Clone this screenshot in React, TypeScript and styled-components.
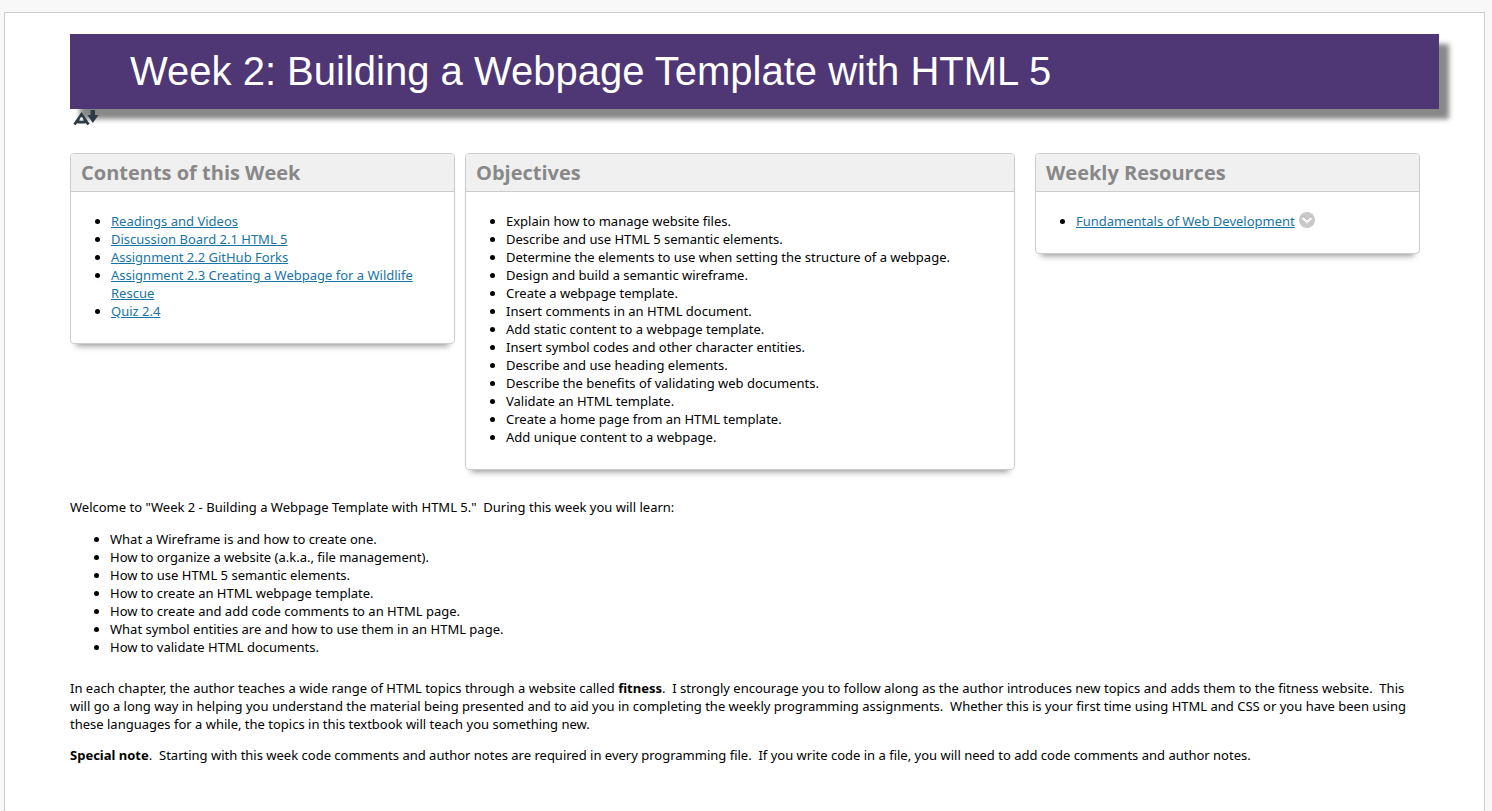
import React from "react";
import styled, { createGlobalStyle } from "styled-components";

const GlobalStyle = createGlobalStyle`
  *, *::before, *::after { box-sizing: border-box; }
  body {
    margin: 0;
    background: #f8f8f8;
    color: #000;
    font-family: "Noto Sans", "Open Sans", sans-serif;
    font-size: 13px;
    line-height: 18px;
  }
`;

const Page = styled.main`
  min-height: calc(100vh - 12px);
  margin: 12px 7px 0 4px;
  padding: 21px 45px 46px 65px;
  border: 1px solid #ccc;
  border-bottom: 0;
  background: #fff;
`;

const Banner = styled.h1`
  margin: 0;
  padding: 14px 60px 15px;
  background: #4f3674;
  color: #fff;
  box-shadow: 10px 10px 5px #888;
  font-family: "Liberation Sans", Arial, sans-serif;
  font-size: 40px;
  font-weight: 400;
  line-height: 46px;
`;

const Tools = styled.div`
  position: relative;
  display: flex;
  height: 44px;
  padding: 1px 3px;
`;

const IconButton = styled.button`
  display: inline-flex;
  align-self: flex-start;
  padding: 0;
  border: 0;
  background: none;
  cursor: pointer;
`;

const MenuButton = styled(IconButton)`
  margin-left: 4px;
  vertical-align: -2px;
`;

const Cards = styled.div`
  display: grid;
  grid-template-columns: 385fr 550fr 395fr;
  align-items: start;
  column-gap: 10px;
  padding-right: 19px;
`;

const Card = styled.section<{ $inset?: boolean }>`
  margin-left: ${(p) => (p.$inset ? "10px" : "0")};
  border: 1px solid #ccc;
  border-radius: 4px;
  background: #fff;
  box-shadow: 0 8px 6px -6px #999;
`;

const CardTitle = styled.h2`
  margin: 0;
  padding: 5px 10px 4px;
  border-bottom: 1px solid #ccc;
  border-radius: 3px 3px 0 0;
  background: #f0f0f0;
  color: #888;
  font-family: "Open Sans", "Noto Sans", sans-serif;
  font-size: 20px;
  font-weight: 700;
  line-height: 28px;
`;

const List = styled.ul`
  margin: 0;
  padding: 0 0 0 40px;
`;

const CardBody = styled.div`
  padding: 20px 10px 23px 0;
`;

const Link = styled.a`
  color: #1874a4;
  text-decoration: underline;
`;

const Intro = styled.div`
  margin-top: 28px;
  padding-right: 13px;
`;

const Paragraph = styled.p`
  margin: 0 0 13px;
`;

const Topics = styled(List)`
  margin: 14px 0 23px;
`;

const contents = [
  "Readings and Videos",
  "Discussion Board 2.1 HTML 5",
  "Assignment 2.2 GitHub Forks",
  "Assignment 2.3 Creating a Webpage for a Wildlife Rescue",
  "Quiz 2.4",
];

const objectives = [
  "Explain how to manage website files.",
  "Describe and use HTML 5 semantic elements.",
  "Determine the elements to use when setting the structure of a webpage.",
  "Design and build a semantic wireframe.",
  "Create a webpage template.",
  "Insert comments in an HTML document.",
  "Add static content to a webpage template.",
  "Insert symbol codes and other character entities.",
  "Describe and use heading elements.",
  "Describe the benefits of validating web documents.",
  "Validate an HTML template.",
  "Create a home page from an HTML template.",
  "Add unique content to a webpage.",
];

const topics = [
  "What a Wireframe is and how to create one.",
  "How to organize a website (a.k.a., file management).",
  "How to use HTML 5 semantic elements.",
  "How to create an HTML webpage template.",
  "How to create and add code comments to an HTML page.",
  "What symbol entities are and how to use them in an HTML page.",
  "How to validate HTML documents.",
];

function AlternativeFormatsIcon() {
  return (
    <svg width="26" height="16" viewBox="0 0 26 16" fill="none" aria-hidden="true">
      <path d="M1.500 14.500L8.500 4.500L15.500 14.500M4.500 12H12.500" stroke="#2d3b45" strokeWidth="2.800" />
      <circle cx="8.500" cy="9" r="1.700" fill="#e4e4e4" />
      <path fill="#2d3b45" d="M17.500 0H22V5H25.500L19.800 13L14.500 5H17.500Z" />
    </svg>
  );
}

function ChevronIcon() {
  return (
    <svg width="16" height="16" viewBox="0 0 16 16" fill="none" aria-hidden="true">
      <circle cx="8" cy="8" r="8" fill="#c8c8c8" />
      <path d="M3.500 5L8 9L12.500 5" stroke="#b0b0b0" strokeWidth="2" />
      <path d="M3.500 5.800L8 10L12.500 5.800" stroke="#f8f8f8" strokeWidth="2.400" />
    </svg>
  );
}

export default function App() {
  return (
    <>
      <GlobalStyle />
      <Page>
        <Banner>Week 2: Building a Webpage Template with HTML 5</Banner>
        <Tools>
          <IconButton type="button" aria-label="Alternative formats">
            <AlternativeFormatsIcon />
          </IconButton>
        </Tools>
        <Cards>
          <Card>
            <CardTitle>Contents of this Week</CardTitle>
            <CardBody>
              <List>
                {contents.map((item) => (
                  <li key={item}>
                    <Link href="#">{item}</Link>
                  </li>
                ))}
              </List>
            </CardBody>
          </Card>
          <Card>
            <CardTitle>Objectives</CardTitle>
            <CardBody>
              <List>
                {objectives.map((item) => (
                  <li key={item}>{item}</li>
                ))}
              </List>
            </CardBody>
          </Card>
          <Card $inset>
            <CardTitle>Weekly Resources</CardTitle>
            <CardBody>
              <List>
                <li>
                  <Link href="#">Fundamentals of Web Development</Link>
                  <MenuButton type="button" aria-label="Item options">
                    <ChevronIcon />
                  </MenuButton>
                </li>
              </List>
            </CardBody>
          </Card>
        </Cards>
        <Intro>
          <Paragraph>
            Welcome to "Week 2 - Building a Webpage Template with HTML 5."&nbsp; During this week you will learn:
          </Paragraph>
          <Topics>
            {topics.map((item) => (
              <li key={item}>{item}</li>
            ))}
          </Topics>
          <Paragraph>
            In each chapter, the author teaches a wide range of HTML topics through a website called{" "}
            <strong>fitness</strong>.&nbsp; I strongly encourage you to follow along as the author introduces new
            topics and adds them to the fitness website.&nbsp; This will go a long way in helping you understand the
            material being presented and to aid you in completing the weekly programming assignments.&nbsp; Whether
            this is your first time using HTML and CSS or you have been using these languages for a while, the topics
            in this textbook will teach you something new.
          </Paragraph>
          <Paragraph>
            <strong>Special note</strong>.&nbsp; Starting with this week code comments and author notes are required in
            every programming file.&nbsp; If you write code in a file, you will need to add code comments and author
            notes.
          </Paragraph>
        </Intro>
      </Page>
    </>
  );
}
